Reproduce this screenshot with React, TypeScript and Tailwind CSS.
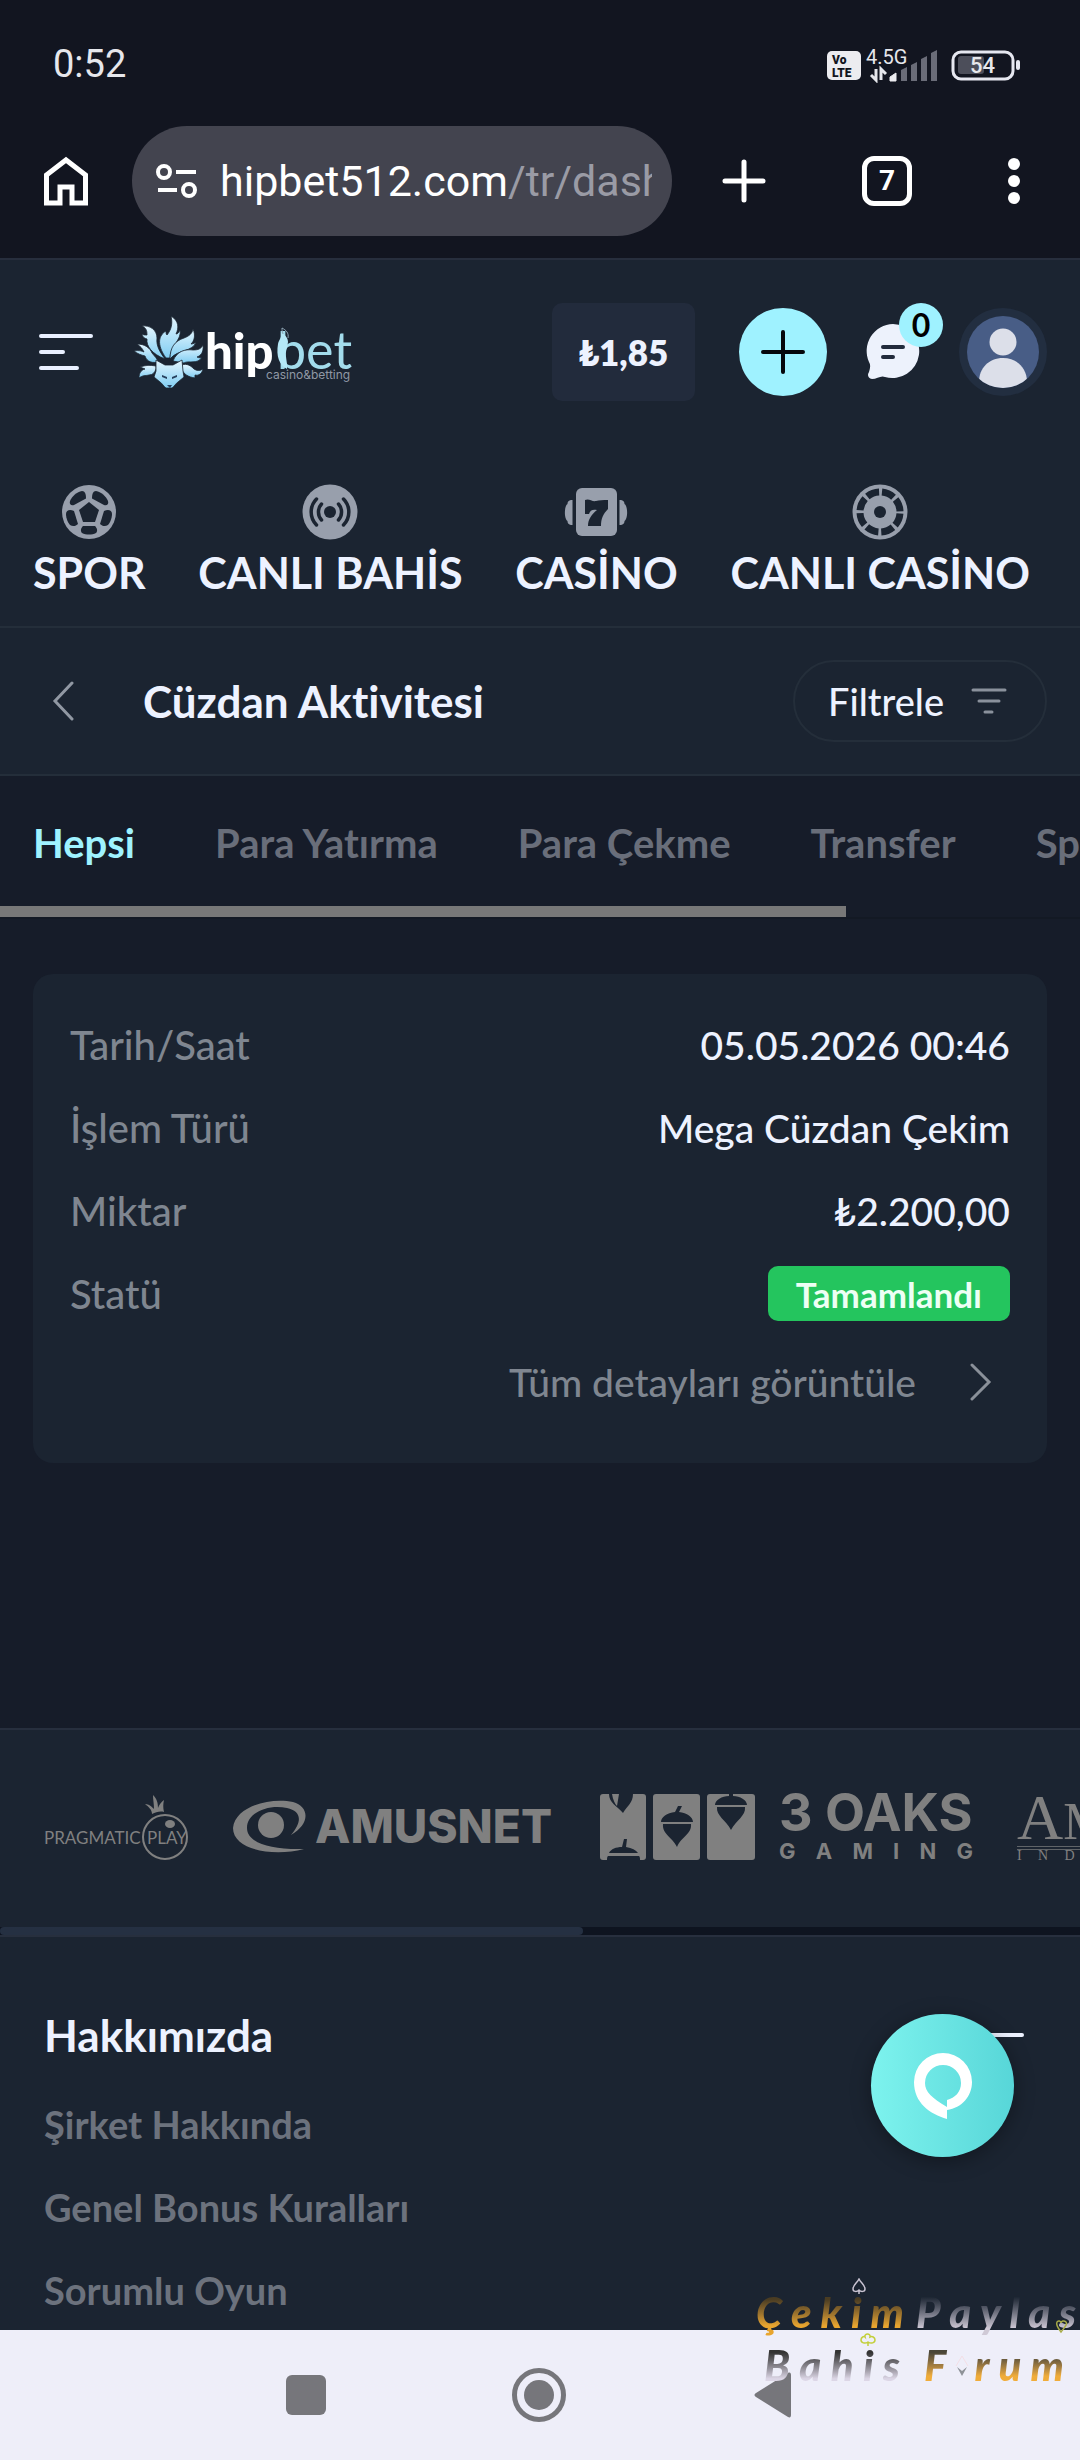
import { useState } from "react";
import type { ReactNode } from "react";

interface NavItem {
  label: string;
  icon: ReactNode;
}

interface DetailRow {
  label: string;
  value: string;
}

const SportIcon = () => (
  <svg viewBox="0 0 56 56" className="size-14">
    <circle cx="28" cy="28" r="27" fill="#989fac" />
    <g fill="#1b2431">
      <path d="M28 18l10 8-4 12H22l-4-12z" />
      <path d="M25 14.500C25 10 24 7 21 7c-5 1-10 5-12 10-1 3 1 5 4 4z" />
      <path d="M31 14.500C31 10 32 7 35 7c5 1 10 5 12 10 1 3-1 5-4 4z" />
      <path d="M13 27c-4-2-8-1-8 3 0 4 2 9 4 11 3 2 6 1 8-1z" />
      <path d="M43 27c4-2 8-1 8 3 0 4-2 9-4 11-3 2-6 1-8-1z" />
      <path d="M22 42h12c2 2 3 5 1 7-4 2-10 2-14 0-2-2-1-5 1-7z" />
    </g>
  </svg>
);

const LiveIcon = () => (
  <svg viewBox="0 0 56 56" className="size-14">
    <circle cx="28" cy="28" r="27.500" fill="#989fac" />
    <circle cx="28" cy="28" r="6" fill="#1b2431" />
    <g fill="none" stroke="#1b2431" strokeWidth="3.500" strokeLinecap="round">
      <path d="M19.500 20a12 12 0 0 0 0 16M36.500 20a12 12 0 0 1 0 16" />
      <path d="M14.500 15a18.500 18.500 0 0 0 0 26M41.500 15a18.500 18.500 0 0 1 0 26" />
    </g>
  </svg>
);

const SlotIcon = () => (
  <svg viewBox="0 0 64 56" className="h-14 w-16">
    <rect x="12" y="4" width="41" height="48" rx="6" fill="#989fac" />
    <path
      d="M8.500 16v25c-4 0-5-2-5-4C0 35 0 22 3.500 20c0-2 1-4 5-4zM55.500 16v25c4 0 5-2 5-4 3.500-2 3.500-15 0-17 0-2-1-4-5-4z"
      fill="#989fac"
    />
    <path
      d="M21 16c4-2 7 2 11 1 3-1 7-1 12-1v9c-5 5-7 10-7 17H24c0-7 4-12 9-16-4-1-7 0-8 4h-4z"
      fill="#1b2431"
    />
  </svg>
);

const ChipIcon = () => (
  <svg viewBox="0 0 56 56" className="size-14">
    <circle cx="28" cy="28" r="27.500" fill="#989fac" />
    <circle
      cx="28"
      cy="28"
      r="20"
      fill="none"
      stroke="#1b2431"
      strokeWidth="7"
      strokeDasharray="12.700 3"
      strokeDashoffset="-1.500"
    />
    <circle cx="28" cy="28" r="6" fill="#1b2431" />
  </svg>
);

const HipbetLogo = () => (
  <svg viewBox="12 12 222 76" className="h-19 w-[222px]" role="img" aria-label="hipbet">
    <defs>
      <linearGradient id="tail" x1="0" y1="0" x2="0" y2="1">
        <stop offset="0" stopColor="#e4f6ff" />
        <stop offset="1" stopColor="#80cdf2" />
      </linearGradient>
    </defs>
    <g fill="url(#tail)" stroke="#1b2431" strokeWidth="0.800">
      <path d="M38 60c-9 2-12-3-13-6-4-1-7-2-11-5 5-1 8 0 10 1-2-4-3-5-7-8 8 0 13 4 15 9 3 4 5 5 6 9z" />
      <path d="M45 57C32 52 26 44 27 37c-4-1-5-4-5-5 1 1 3 1 5 1 0-5-1-7-5-9 8-1 15 4 15 12-1 8 3 14 8 21z" />
      <path d="M46 56C36 42 39 33 46 29c0 2 0 3 1 4 4-5 6-11 4-19 8 5 8 12 5 18 2 0 3-2 4-4 2 10-10 16-10 28z" />
      <path d="M50 57c0-12 5-18 14-21 5-2 8-4 9-9 3 7 1 12-2 15 2 0 4-1 5-2-3 10-18 7-26 17z" />
      <path d="M53 59c4-10 12-12 20-11 5 0 8-1 10-5 1 8-3 11-6 12 2 1 4 1 5 0-4 8-14 3-18 6z" />
      <path d="M62 63c5-2 9 1 12 4 3 2 6 2 9 0-1 5-5 7-8 6v3c-7-1-11-4-13-8z" />
      <path d="M36 64c-6-1-10-1-16 1l5 2c-4 1-6 4-6 9 4-3 6-2 10-3 4 0 6-3 7-6z" />
      <path d="M36 58l9 5h8l9-5 1 11 1 6-6 5c-2 1-4 5-6 6h-6c-2-1-4-5-6-6l-6-5 2-6z" />
    </g>
    <path d="M42 73l5 2v2l-5-2zM57 73l-5 2v2l5-2zM47 83h5l-2 3z" fill="#27405e" />
    <text x="85" y="67" fontSize="49" className="fill-white font-[Lato] font-black">
      hip
    </text>
    <text x="157" y="67" fontSize="52" className="fill-[#a3dcec] font-[Lato] font-normal">
      bet
    </text>
    <path
      d="M158 42c1-5 4-6 3-11 4 1 7 5 7 9l-1 6c-3 7 1 14 0 21-8-4-11-13-9-25z"
      fill="#b5e8f7"
    />
    <path d="M163 32c-1-3-1-4-1-6 4 2 7 5 6 10" fill="none" stroke="#8fa6b5" />
    <text x="146" y="77" fontSize="12" className="fill-[#9098a5] font-[Inter]">
      casino&amp;betting
    </text>
  </svg>
);

const navItems: NavItem[] = [
  { label: "SPOR", icon: <SportIcon /> },
  { label: "CANLI BAHİS", icon: <LiveIcon /> },
  { label: "CASİNO", icon: <SlotIcon /> },
  { label: "CANLI CASİNO", icon: <ChipIcon /> },
];

const tabs = ["Hepsi", "Para Yatırma", "Para Çekme", "Transfer", "Spor"];

const rows: DetailRow[] = [
  { label: "Tarih/Saat", value: "05.05.2026 00:46" },
  { label: "İşlem Türü", value: "Mega Cüzdan Çekim" },
  { label: "Miktar", value: "₺2.200,00" },
];

const footerLinks = ["Şirket Hakkında", "Genel Bonus Kuralları", "Sorumlu Oyun"];

// one span per letter, spread over the width of the parent
const SpreadText = ({ text, className }: { text: string; className: string }) => (
  <span className="flex justify-between">
    {text.split("").map((letter, index) => (
      <span key={index} className={className}>
        {letter}
      </span>
    ))}
  </span>
);

const StatusBar = () => (
  <div className="flex h-32 items-center justify-between pl-[53px] pr-[59px] font-[Roboto] text-[#e6e7ec]">
    <span className="text-[38px]">0:52</span>
    <svg viewBox="0 0 194 38" className="h-[38px] w-[194px]">
      <rect x="0" y="6" width="34" height="29" rx="5" fill="#ececf0" />
      <text x="5" y="19" fontSize="12" fill="#121520" className="font-[Roboto] font-black">
        Vo
      </text>
      <text x="5" y="32" fontSize="12" fill="#121520" className="font-[Roboto] font-black">
        LTE
      </text>
      <text x="39" y="19" fontSize="20" fill="#e6e7ec" className="font-[Roboto]">
        4.5G
      </text>
      <path d="M49 24v11l-5-5M54 35V24l5 5" fill="none" stroke="#e6e7ec" strokeWidth="3" />
      <path d="M63 36v-4l6-4v8z" fill="#ececf0" stroke="#ececf0" />
      <path
        d="M74 36V25l6-3v14zM84 36V20l6-3v19zM94 36V14l6-3v25zM104 36V8l6-3v31z"
        fill="#6a6c78"
      />
      <rect x="126" y="7" width="60" height="27" rx="8" fill="none" stroke="#e6e7f0" strokeWidth="3" />
      <rect x="131" y="11" width="26" height="18" rx="3" fill="#4c4e5a" />
      <text x="143" y="28" fontSize="22" fill="#e6e7ec" className="font-[Roboto] font-medium">
        54
      </text>
      <rect x="189" y="15" width="4" height="10" rx="2" fill="#e6e7f0" />
    </svg>
  </div>
);

const BrowserBar = () => (
  <div className="flex h-[132px] items-start border-b-2 border-[#272e3d] pr-[60px] pl-10">
    <button type="button" aria-label="Ana sayfa" className="mt-[26px] shrink-0">
      <svg viewBox="0 0 52 54" className="h-[54px] w-13" fill="none" stroke="#fff" strokeWidth="5">
        <path d="M6.500 21L26 6l19.500 15v28H32V33H20v16H6.500z" />
      </svg>
    </button>
    <div className="-mt-0.5 ml-10 flex h-[110px] min-w-0 flex-1 items-center gap-[22px] rounded-full bg-[#43444f] pr-5 pl-6">
      <svg viewBox="0 0 42 36" className="h-9 w-[42px] shrink-0" fill="none" stroke="#fff" strokeWidth="4">
        <circle cx="8" cy="9" r="6" />
        <path d="M20 9h20M2 27h19" />
        <circle cx="33" cy="27" r="6" />
      </svg>
      <div className="min-w-0 overflow-hidden font-[Roboto] text-[43px] whitespace-nowrap">
        <span className="text-white">hipbet512.com</span>
        <span className="text-[#9a9ba5]">/tr/dashboard</span>
      </div>
    </div>
    <div className="mt-7 ml-[50px] flex items-center gap-24">
      <button type="button" aria-label="Yeni sekme">
        <svg viewBox="0 0 44 44" className="size-11" stroke="#fff" strokeWidth="5" strokeLinecap="round">
          <path d="M22 3v38M3 22h38" />
        </svg>
      </button>
      <button
        type="button"
        className="flex size-[50px] items-center justify-center rounded-xl border-5 border-white font-[Roboto] text-[28px] font-bold text-white"
      >
        7
      </button>
      <button type="button" aria-label="Menü">
        <svg viewBox="0 0 12 46" className="h-[46px] w-3" fill="#fff">
          <circle cx="6" cy="6" r="6" />
          <circle cx="6" cy="23" r="6" />
          <circle cx="6" cy="40" r="6" />
        </svg>
      </button>
    </div>
  </div>
);

const SiteHeader = () => (
  <header className="flex h-[184px] items-center bg-[#1b2431] pr-[33px] pl-[39px]">
    <button type="button" aria-label="Menü">
      <svg viewBox="0 0 54 38" className="h-[38px] w-[54px]" stroke="#e9f0ff" strokeWidth="4" strokeLinecap="round">
        <path d="M2 3h50M2 19h22M2 35h36" />
      </svg>
    </button>
    <a href="#" className="ml-[39px]">
      <HipbetLogo />
    </a>
    <div className="ml-auto flex h-[98px] w-[143px] items-center justify-center rounded-[10px] bg-[#222b3c] text-[35px] font-extrabold text-[#edf2ff]">
      ₺1,85
    </div>
    <button
      type="button"
      aria-label="Para yatır"
      className="ml-11 flex size-22 items-center justify-center rounded-full bg-[#9ff2ff]"
    >
      <svg viewBox="0 0 44 44" className="size-11" stroke="#05070b" strokeWidth="4" strokeLinecap="round">
        <path d="M22 2v40M2 22h40" />
      </svg>
    </button>
    <button type="button" aria-label="Mesajlar" className="relative ml-[38px]">
      <svg viewBox="0 0 56 58" className="h-[58px] w-14">
        <path d="M28 1a27 27 0 1 1-8 53c-4-2-8 2-13 2-4-1-5-4-3-7 1-4 2-7 0-10A27 27 0 0 1 28 1z" fill="#edf2fc" />
        <path d="M18 24h20M18 34h10" stroke="#222b3c" strokeWidth="4" strokeLinecap="round" />
      </svg>
      <span className="absolute -top-5 left-[34px] flex size-11 items-center justify-center rounded-full bg-[#9ff2ff] text-[32px] font-bold text-black">
        0
      </span>
    </button>
    <button
      type="button"
      aria-label="Profil"
      className="ml-[38px] flex size-22 items-center justify-center rounded-full bg-[#222e40]"
    >
      <svg viewBox="0 0 72 72" className="size-18">
        <clipPath id="avatar">
          <circle cx="36" cy="36" r="36" />
        </clipPath>
        <g clipPath="url(#avatar)">
          <rect width="72" height="72" fill="#485d86" />
          <circle cx="36" cy="26" r="13.500" fill="#dcdfe9" />
          <path d="M12 66c0-14 10-24 24-24s24 10 24 24v8H12z" fill="#dcdfe9" />
        </g>
      </svg>
    </button>
  </header>
);

const TransactionCard = () => (
  <section className="mx-[33px] mt-[55px] flex h-[489px] flex-col rounded-[20px] bg-[#1b2431] px-[37px] pt-[29px] text-[39px] leading-[50px] font-medium">
    <dl>
      {rows.map((row) => (
        <div key={row.label} className="flex h-[83px] items-center justify-between">
          <dt className="text-[40px] text-[#7f8690]">{row.label}</dt>
          <dd className="text-[#edf2ff]">{row.value}</dd>
        </div>
      ))}
      <div className="flex h-[83px] items-center justify-between">
        <dt className="text-[40px] text-[#7f8690]">Statü</dt>
        <dd className="flex h-[55px] items-center rounded-[10px] bg-[#24c55e] px-7 text-[35px] font-bold text-[#edfff4]">
          Tamamlandı
        </dd>
      </div>
    </dl>
    <a href="#" className="flex h-[94px] items-center justify-end gap-[54px] pr-[18px] text-[#7f8690]">
      Tüm detayları görüntüle
      <svg viewBox="0 0 22 38" className="h-[38px] w-[22px]" fill="none" stroke="#8a9099" strokeWidth="3" strokeLinecap="round">
        <path d="M2 2l17 17L2 36" />
      </svg>
    </a>
  </section>
);

const Providers = () => (
  <div className="mt-[265px] overflow-hidden border-y-2 border-[#272f3e] bg-[#1b2431]">
    <div className="flex h-[197px] items-center pb-1 pl-11 text-[#808080]">
      <svg viewBox="0 0 145 66" className="h-[66px] w-[145px] shrink-0" role="img" aria-label="Pragmatic Play">
        <text x="0" y="50" fontSize="17" fill="#808080" className="font-[Lato]">
          PRAGMATIC
        </text>
        <circle cx="121" cy="43" r="22" fill="none" stroke="#808080" strokeWidth="2" />
        <text x="103" y="50" fontSize="17" fill="#808080" className="font-[Lato]">
          PLAY
        </text>
        <ellipse cx="126" cy="30" rx="5" ry="4" fill="#808080" />
        <path d="M108 20c0-4-3-7-7-10 4 0 7 3 9 5 0-5-1-9-1-14 4 4 5 8 5 13 1-3 3-6 6-8-1 4-1 8 0 12-4-1-8 0-12 2z" fill="#808080" />
      </svg>
      <div className="ml-11 flex shrink-0 items-center gap-2">
        <svg viewBox="0 0 74 54" className="h-[54px] w-[74px]" fill="#808080">
          <circle cx="38" cy="25" r="13" />
          <path d="M71 49C40 57 0 50 0 28 2 6 38-3 60 2c17 5 17 22-2 33 12-14 10-24-4-27C36 4 14 12 14 28c0 15 24 22 57 21z" />
        </svg>
        <span className="font-[Inter] text-[46px] font-extrabold">AMUSNET</span>
      </div>
      <div className="ml-12 flex shrink-0 gap-6">
        <svg viewBox="0 0 155 66" className="h-[66px] w-[155px]">
          <g fill="#808080">
            <rect width="46" height="66" rx="3" />
            <rect x="53" width="47" height="66" rx="3" />
            <rect x="107" width="48" height="66" rx="3" />
          </g>
          <g fill="#1b2431">
            <path d="M9 0h3c1 6 3 10 5 12l2-12h14c0 9-6 12-10 19C17 12 9 9 9 0z" />
            <path d="M7 66c0-2 0-3 1-4h31c1 1 1 2 1 4zM9 59c2-4 7-6 13-6l2-8h3l-1 8c6 1 10 3 12 6z" />
            <path d="M61 28c0-5 6-9 14-10l3-6h4l-3 6c8 1 14 5 14 10zM63 30h28c1 10-10 13-14 23-5-10-15-13-14-23z" />
            <path d="M115 11c0-5 7-9 14-9V0h4v2c7 0 14 4 14 9zM117 13h28c1 9-9 13-14 23-5-10-15-14-14-23z" />
          </g>
        </svg>
        <div className="flex h-[66px] w-[194px] flex-col justify-between">
          <span className="font-[Inter] text-[52px] leading-[38px] font-bold whitespace-nowrap">3 OAKS</span>
          <SpreadText text="GAMING" className="font-[Inter] text-[22px] leading-[18px] font-bold" />
        </div>
      </div>
      <div className="ml-11 flex h-[66px] shrink-0 flex-col justify-between font-[Liberation_Serif]">
        <span className="border-b-4 border-double border-[#606468] text-[52px] leading-[48px]">
          <span className="text-[64px]">A</span>MIGO
        </span>
        <SpreadText text="INDUSTRY" className="text-[14px] leading-[12px]" />
      </div>
    </div>
    <div className="h-2 bg-[#0e1420]">
      <div className="h-2 w-[54%] rounded-full bg-[#253042]" />
    </div>
  </div>
);

const AndroidNav = () => (
  <nav className="flex h-[130px] shrink-0 items-center bg-[#eeeef9] pl-[286px]">
    <button type="button" aria-label="Son uygulamalar" className="size-10 rounded-md bg-[#76767b]" />
    <button type="button" aria-label="Ana ekran" className="ml-[185px]">
      <svg viewBox="0 0 56 56" className="size-14">
        <circle cx="28" cy="28" r="24.500" fill="none" stroke="#76767b" strokeWidth="5" />
        <circle cx="28" cy="28" r="15" fill="#76767b" />
      </svg>
    </button>
    <button type="button" aria-label="Geri" className="ml-[187px]">
      <svg viewBox="0 0 38 48" className="h-12 w-[38px]" fill="#76767b">
        <path d="M2 22L34 2c2-1 3 0 3 2v40c0 2-1 3-3 2L2 26c-2-1-2-3 0-4z" />
      </svg>
    </button>
  </nav>
);

const Watermark = () => (
  <div className="pointer-events-none absolute right-0 bottom-[68px] w-[324px] font-[Lato] text-[42px] leading-[53px] font-black italic">
    <div className="flex gap-2">
      <div className="w-[152px]">
        <SpreadText text="Çekim" className="bg-linear-to-b from-[#4a3c22] from-25% to-[#e8a52f] to-75% bg-clip-text pr-1 text-transparent" />
      </div>
      <div className="flex-1">
        <SpreadText text="Paylas" className="bg-linear-to-b from-[#1b2431] from-20% to-[#cfc9d6] to-80% bg-clip-text pr-1 text-transparent" />
      </div>
    </div>
    <div className="flex gap-5 pr-3 pl-2">
      <div className="w-[140px]">
        <SpreadText text="Bahis" className="bg-linear-to-b from-[#333] from-25% to-[#dcd6e6] to-75% bg-clip-text pr-1 text-transparent" />
      </div>
      <div className="flex flex-1 items-center justify-between">
        <span className="bg-linear-to-b from-[#4a4638] from-25% to-[#f0ac3a] to-70% bg-clip-text pr-1 text-transparent">F</span>
        <svg viewBox="0 0 14 22" className="h-[22px] w-[14px]" fill="none">
          <path d="M1 11L7 1l6 10" stroke="#f3dfe6" />
          <path d="M2 12l5 9 5-9-5 4z" fill="#8e9298" />
        </svg>
        <span className="bg-linear-to-b from-[#4a4638] from-30% to-[#f0ac3a] to-70% bg-clip-text pr-1 text-transparent">r</span>
        <span className="bg-linear-to-b from-[#4a4638] from-30% to-[#f0ac3a] to-70% bg-clip-text pr-1 text-transparent">u</span>
        <span className="bg-linear-to-b from-[#4a4638] from-30% to-[#f0ac3a] to-70% bg-clip-text pr-1 text-transparent">m</span>
      </div>
    </div>
    <svg viewBox="0 0 324 70" className="absolute -top-2 left-0 h-[70px] w-[324px]" fill="none" strokeWidth="1.500">
      <path d="M103 1c2 4 6 6 6 10 0 3-4 3-6 1-2 2-6 2-6-1 0-4 4-6 6-10zM103 12v4" stroke="#c9c3d2" />
      <path d="M305 54c-4-5-5-8-4-10s4-1 4 1c0-2 3-3 5-1s-1 5-5 10z" stroke="#a8ac48" />
      <path d="M112 64c-3 2-7 1-7-2s3-4 4-3c-1-4 6-4 5 0 2-1 5 0 5 3s-4 4-7 2zM112 64v4" stroke="#c3cf3a" />
    </svg>
  </div>
);

export default function App() {
  const [activeTab, setActiveTab] = useState("Hepsi");

  return (
    <div className="relative flex h-screen min-w-0 flex-col overflow-hidden bg-[#121520] font-[Lato,sans-serif] [font-variant-ligatures:none]">
      <StatusBar />
      <BrowserBar />

      <main className="min-h-0 flex-1 overflow-hidden bg-[#161c29]">
        <SiteHeader />

        <nav className="flex h-[184px] justify-between border-b-2 border-[#242e3a] bg-[#1b2431] pt-10 pr-[50px] pl-[33px]">
          {navItems.map((item) => (
            <a
              key={item.label}
              href="#"
              className="flex flex-col items-center gap-2 text-[43px] leading-[50px] font-bold text-[#edf2ff]"
            >
              {item.icon}
              {item.label}
            </a>
          ))}
        </nav>

        <div className="flex h-[148px] items-center border-b-2 border-[#242e3a] bg-[#1b2431] pr-[33px] pl-[52px]">
          <button type="button" aria-label="Geri">
            <svg viewBox="0 0 22 40" className="h-10 w-[22px]" fill="none" stroke="#9198a3" strokeWidth="3" strokeLinecap="round">
              <path d="M20 2L3 20l17 18" />
            </svg>
          </button>
          <h1 className="ml-[69px] text-[44px] font-bold text-[#edf2ff]">Cüzdan Aktivitesi</h1>
          <button
            type="button"
            className="ml-auto flex h-[82px] w-[254px] items-center justify-between rounded-full border-2 border-[#242e3a] pr-[38px] pl-[33px] text-[38px] font-medium text-[#edf2ff]"
          >
            Filtrele
            <svg viewBox="0 0 36 28" className="h-7 w-9" stroke="#8a919c" strokeWidth="3" strokeLinecap="round">
              <path d="M2 3h32M8 14h20M14 25h7" />
            </svg>
          </button>
        </div>

        <div className="overflow-hidden border-b-2 border-[#131924]">
          <div className="flex h-[130px] items-center gap-20 pl-[33px] text-[40px] font-bold">
            {tabs.map((tab) => (
              <button
                key={tab}
                type="button"
                onClick={() => setActiveTab(tab)}
                className={
                  tab === activeTab
                    ? "pt-1 whitespace-nowrap text-[#9ff2ff]"
                    : "pt-1 whitespace-nowrap text-[#696e7a]"
                }
              >
                {tab}
              </button>
            ))}
          </div>
          <div className="h-[11px] w-[78.333%] bg-[#787878]" />
        </div>

        <TransactionCard />
        <Providers />

        <footer className="h-[500px] bg-[#1b2431] px-11 pt-[70px]">
          <div className="flex items-center justify-between">
            <h2 className="text-[44px] leading-[56px] font-bold text-[#edf2ff]">Hakkımızda</h2>
            <span className="mr-3 h-1 w-9 rounded-full bg-[#edf2ff]" />
          </div>
          <ul className="mt-5 text-[38px] font-bold text-[#6c727d]">
            {footerLinks.map((link) => (
              <li key={link} className="flex h-[83px] items-center">
                <a href="#">{link}</a>
              </li>
            ))}
          </ul>
        </footer>
      </main>

      <AndroidNav />

      <button
        type="button"
        aria-label="Canlı destek"
        className="absolute right-[66px] bottom-[303px] flex size-[143px] items-center justify-center rounded-full bg-linear-to-r from-[#7df3ee] to-[#57d6d8] shadow-[0_4px_20px_rgba(0,0,0,0.35)]"
      >
        <svg viewBox="0 0 58 66" className="h-[66px] w-[58px]">
          <path
            d="M29 0a29 29 0 0 1 29 29c0 14-10 26-25 28v9C16 61 0 50 0 29A29 29 0 0 1 29 0zm0 12a18 18 0 0 0-18 18c0 9 7 15 22 24v-7c8-2 14-8 14-17a18 18 0 0 0-18-18z"
            fill="#fff"
          />
        </svg>
      </button>

      <Watermark />
    </div>
  );
}
